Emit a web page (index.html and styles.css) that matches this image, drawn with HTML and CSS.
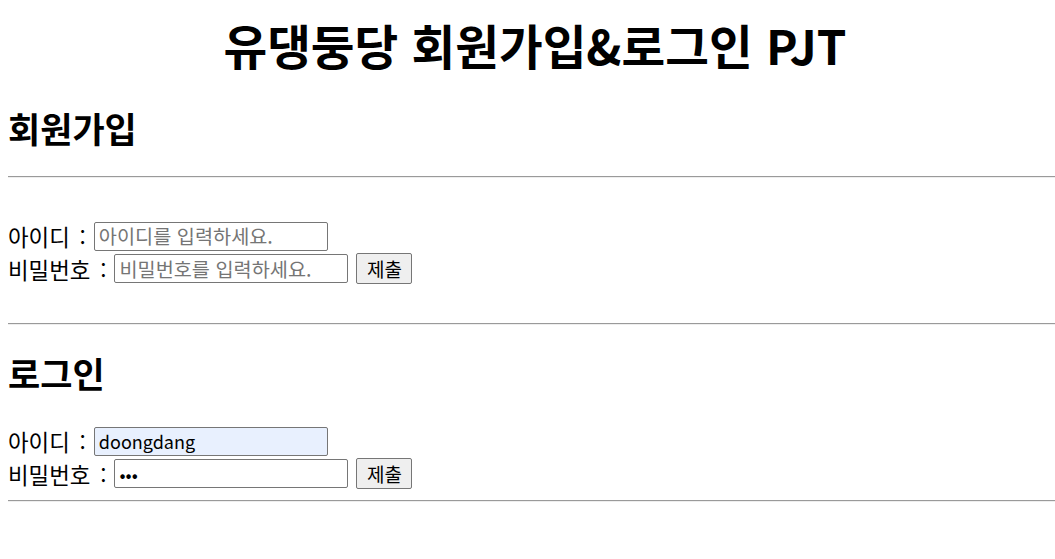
FILE: index.html
```html
<!DOCTYPE html>
<html lang="ko">
<head>
<meta charset="utf-8">
<link rel="stylesheet" href="styles.css">
</head>
<body>
<h1 class="title">유댕둥당 회원가입&amp;로그인 PJT</h1>
<h2 class="section section-first">회원가입</h2>
<hr class="rule">
<form class="form form-signup">
  <div class="row"><label class="label">아이디 :</label><input class="field" type="text" placeholder="아이디를 입력하세요."></div>
  <div class="row"><label class="label">비밀번호 :</label><input class="field" type="password" placeholder="비밀번호를 입력하세요."><button class="btn" type="button">제출</button></div>
</form>
<hr class="rule rule-mid">
<h2 class="section">로그인</h2>
<form class="form form-login">
  <div class="row"><label class="label">아이디 :</label><input class="field field-filled" type="text" value="doongdang"></div>
  <div class="row"><label class="label">비밀번호 :</label><input class="field" type="password" value="123"><button class="btn" type="button">제출</button></div>
</form>
<hr class="rule rule-end">
</body>
</html>
```
FILE: styles.css
```css
html {
  overflow: hidden;
}
body {
  margin: 8px;
  width: 1054px;
  font-family: "Noto Sans CJK KR", "Noto Sans", sans-serif;
  color: #000;
  background: #fff;
}
.title {
  text-align: center;
  font-size: 47.5px;
  font-weight: bold;
  margin: 5px 0 0;
  line-height: 64px;
}
.section {
  font-size: 35px;
  font-weight: bold;
  margin: 26px 0 0;
  line-height: 44px;
}
.section-first { margin-top: 29px; }
.rule {
  border: 0;
  border-top: 1px solid #9a9a9a;
  border-bottom: 1px solid #eeeeee;
  margin: 26px 0 0;
  height: 0;
}
.form {
  margin-top: 42px;
}
.form-login { margin-top: 30px; }
.row {
  display: flex;
  align-items: center;
  height: 32px;
}
.row + .row { height: 33px; }
.label {
  font-size: 22.4px;
  margin-right: 8px;
  word-spacing: 3.5px;
}
.field {
  width: 234px;
  height: 29px;
  box-sizing: border-box;
  border: 1px solid #767676;
  border-radius: 2px;
  padding: 1px 4px;
  font-family: "Noto Sans CJK KR", sans-serif;
  font-size: 18px;
}
.field::placeholder { color: #757575; font-size: 19.7px; }
.field-filled { background: #e8f0fe; }
.btn {
  margin-left: 8px;
  height: 31px;
  width: 56px;
  box-sizing: border-box;
  border: 1px solid #767676;
  border-radius: 2px;
  background: #efefef;
  font-family: "Noto Sans CJK KR", sans-serif;
  font-size: 19px;
  padding: 0;
}
.rule-mid { margin-top: 38px; }
.rule-end { margin-top: 10px; }
```
